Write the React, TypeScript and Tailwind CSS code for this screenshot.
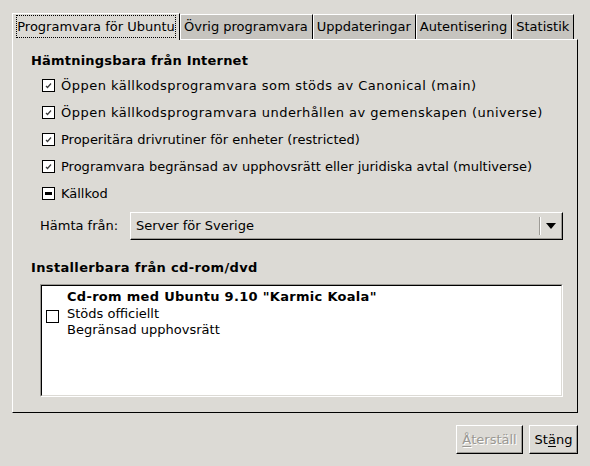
import React from "react";

// ─── Bits ─────────────────────────────────────────────────────

function CheckBox({ state }: { state: "on" | "off" | "mixed" }) {
  return (
    <span className="flex h-[13px] w-[13px] shrink-0 items-center justify-center border border-black bg-white">
      {state === "on" && (
        <svg width="9" height="9" viewBox="0 0 9 9">
          <path d="M2 5 L3.5 6.5 L7 2.5" fill="none" stroke="#3a3a3a" strokeWidth="1.2" />
        </svg>
      )}
      {state === "mixed" && <span className="h-[3px] w-[7px] bg-black" />}
    </span>
  );
}

function Tab({ label, active = false }: { label: string; active?: boolean }) {
  if (active) {
    return (
      <div className="relative z-10 -mb-px flex h-[27px] w-[168px] items-start border-l border-t border-r border-l-white border-t-white border-r-black bg-[#dcdad5] px-[3px] pt-[1px]">
        <span className="flex h-[23px] w-full items-center justify-center border border-dotted border-black">
          {label}
        </span>
      </div>
    );
  }
  return (
    <div className="flex h-[25px] items-center border-t border-r border-t-white border-r-black bg-[#c6c4bf] px-[4px] shadow-[inset_1px_0_0_#ffffff]">
      {label}
    </div>
  );
}

function Button({ children, disabled = false, w }: { children: React.ReactNode; disabled?: boolean; w: string }) {
  return (
    <div
      className={`flex h-[29px] ${w} items-center justify-center border border-t-white border-l-white border-r-black border-b-black bg-[#dcdad5] shadow-[inset_-1px_-1px_0_#9d9b96] ${
        disabled ? "text-[#9a9893] [text-shadow:1px_1px_0_#ffffff]" : "text-black"
      }`}
    >
      {children}
    </div>
  );
}

// ─── App ──────────────────────────────────────────────────────

const sources: { label: string; state: "on" | "off" | "mixed"; wide?: boolean }[] = [
  { label: "Öppen källkodsprogramvara som stöds av Canonical (main)", state: "on", wide: true },
  { label: "Öppen källkodsprogramvara underhållen av gemenskapen (universe)", state: "on", wide: true },
  { label: "Properitära drivrutiner för enheter (restricted)", state: "on" },
  { label: "Programvara begränsad av upphovsrätt eller juridiska avtal (multiverse)", state: "on" },
  { label: "Källkod", state: "mixed" },
];

export default function App() {
  return (
    <div className="h-[466px] w-[590px] bg-[#dcdad5] pl-[12px] pr-[12px] pt-[13px] font-['DejaVu_Sans',sans-serif] text-[13px] leading-4 text-black">
      {/* Tabs */}
      <div className="flex h-[26px] items-end">
        <Tab label="Programvara för Ubuntu" active />
        <Tab label="Övrig programvara" />
        <Tab label="Uppdateringar" />
        <Tab label="Autentisering" />
        <Tab label="Statistik" />
      </div>

      {/* Page frame */}
      <div className="flex h-[374px] w-[566px] flex-col border border-t-white border-l-white border-r-black border-b-black pl-[18px] pr-[14px] pt-[13px]">
        <div className="h-4 font-bold tracking-[0.2px]">Hämtningsbara från Internet</div>
        <div className="mt-[3px] flex flex-col pl-[11px]">
          {sources.map((s) => (
            <div key={s.label} className="flex h-[27px] items-center gap-[6px]">
              <CheckBox state={s.state} />
              <span className={s.wide ? "tracking-[0.48px]" : ""}>{s.label}</span>
            </div>
          ))}
        </div>

        <div className="mt-[5px] flex h-[28px] items-center">
          <span className="w-[99px] pl-[9px]">Hämta från:</span>
          <div className="flex h-[28px] flex-1 items-center border border-t-white border-l-white border-r-black border-b-black shadow-[inset_-1px_-1px_0_#9d9b96]">
            <span className="flex-1 pl-[5px]">Server för Sverige</span>
            <span className="h-[18px] w-px bg-[#9d9b96] shadow-[1px_0_0_#ffffff]" />
            <span className="flex w-[22px] items-center justify-center">
              <svg width="10" height="6" viewBox="0 0 10 6">
                <path d="M0 0 H10 L5 6 Z" fill="#000" />
              </svg>
            </span>
          </div>
        </div>

        <div className="mt-[20px] h-4 font-bold tracking-[0.35px]">Installerbara från cd-rom/dvd</div>
        <div className="mt-[8px] ml-[9px] h-[113px] border border-t-[#9d9b96] border-l-[#9d9b96] border-r-white border-b-white">
          <div className="flex h-full items-center border border-t-black border-l-black border-r-[#dcdad5] border-b-[#dcdad5] bg-white pl-[4px]">
            <div className="flex h-full items-start gap-[8px] pt-[3px]">
              <div className="pt-[21px]">
                <CheckBox state="off" />
              </div>
              <div className="flex flex-col leading-[16.5px]">
                <span className="font-bold tracking-[0.3px]">Cd-rom med Ubuntu 9.10 "Karmic Koala"</span>
                <span>Stöds officiellt</span>
                <span>Begränsad upphovsrätt</span>
              </div>
            </div>
          </div>
        </div>
      </div>

      {/* Buttons */}
      <div className="mt-[12px] flex justify-end gap-[6px]">
        <Button w="w-[67px]" disabled>
          <span>
            <span className="underline decoration-1 underline-offset-2">Å</span>terställ
          </span>
        </Button>
        <Button w="w-[49px]">
          <span>
            St<span className="underline decoration-1 underline-offset-2">ä</span>ng
          </span>
        </Button>
      </div>
    </div>
  );
}
